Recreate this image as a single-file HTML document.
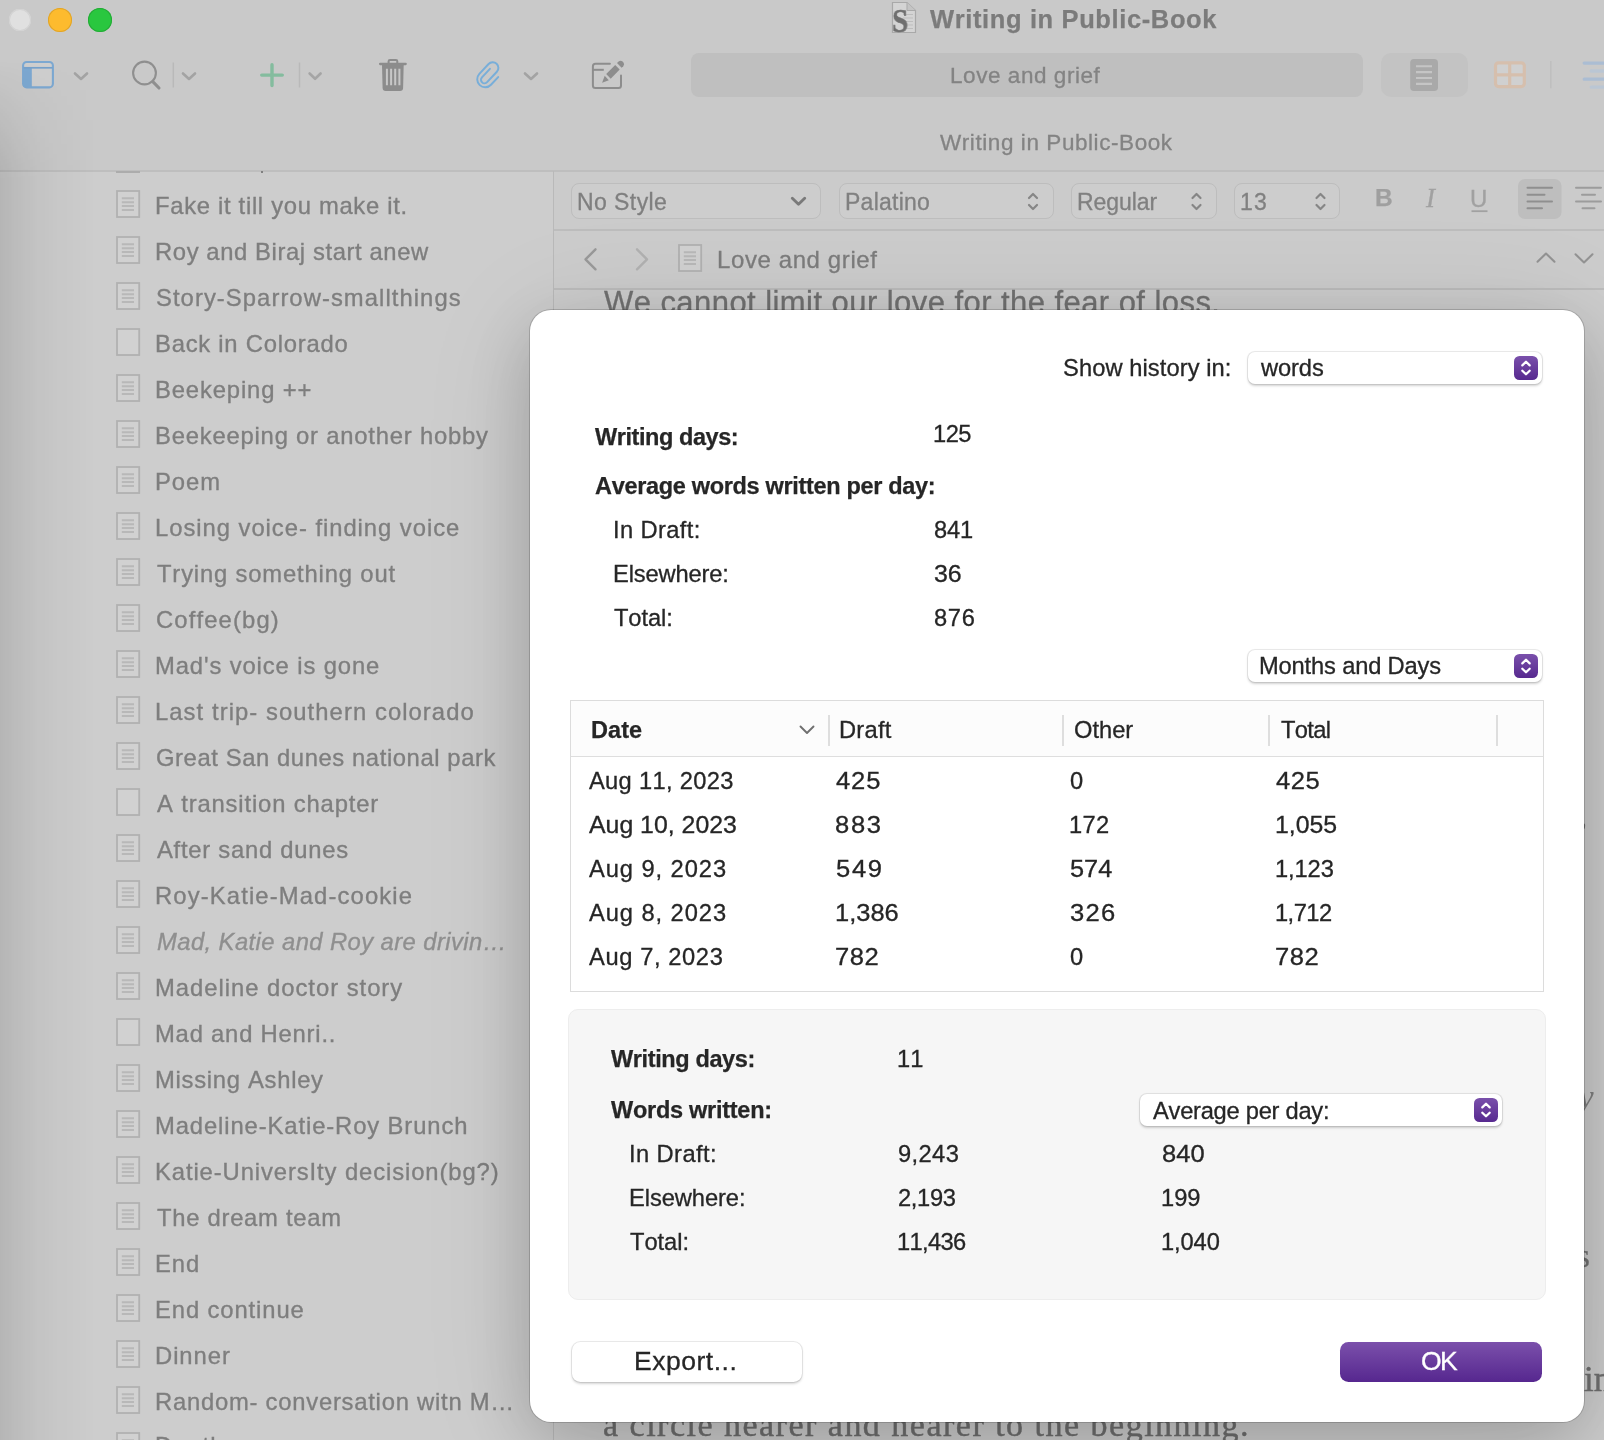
<!DOCTYPE html>
<html><head><meta charset="utf-8"><title>Writing in Public-Book</title>
<style>
html,body{margin:0;padding:0}
body{width:1604px;height:1440px;overflow:hidden;position:relative;background:#c9c9c9;font-family:"Liberation Sans",sans-serif;font-kerning:none}
.t{position:absolute;white-space:nowrap;line-height:1;font-kerning:none;will-change:transform}
.hl{position:absolute;height:1.5px}
.vl{position:absolute;width:1.5px}
.di{position:absolute}
#tb{position:absolute;left:0;top:0;width:1604px;height:170px;background:#c9c9c9}
#sb{position:absolute;left:0;top:171px;width:553px;height:1269px;background:#cdcdcd}
#fmt{position:absolute;left:554px;top:171px;width:1050px;height:58px;background:#cbcbcb}
#hdr{position:absolute;left:554px;top:230px;width:1050px;height:58px;background:#cccccc}
#ed{position:absolute;left:554px;top:289px;width:1050px;height:1151px;background:#cdcdcd}
.fb{position:absolute;box-sizing:border-box;border:1.5px solid #bdbdbd;border-radius:8px;background:#cdcdcd}
#vig{position:absolute;left:0;top:60px;width:96px;height:1380px;background:linear-gradient(90deg,rgba(0,0,0,.115),rgba(0,0,0,.078) 18%,rgba(0,0,0,.045) 40%,rgba(0,0,0,.018) 66%,rgba(0,0,0,0));-webkit-mask-image:linear-gradient(180deg,transparent,#000 120px);mask-image:linear-gradient(180deg,transparent,#000 120px)}
#dlg{position:absolute;left:530px;top:309.5px;width:1054px;height:1112.5px;border-radius:21px;background:#fff;box-shadow:0 0 0 1px rgba(0,0,0,.17),0 22px 70px rgba(0,0,0,.19),0 10px 120px rgba(0,0,0,.09)}
.sel{position:absolute;box-sizing:border-box;background:#fff;border-radius:7px;box-shadow:0 0 0 1px rgba(0,0,0,.075),0 1.5px 2.5px rgba(0,0,0,.18)}
.stp{position:absolute;width:24px;height:24px;border-radius:5.5px;background:linear-gradient(180deg,#7a50ab,#57298f)}
.stp svg{display:block}
#tbl{position:absolute;box-sizing:border-box;left:570px;top:700px;width:974px;height:291.5px;border:1.5px solid #dcdcdc;background:#fff}
#th{height:54.5px;background:#fcfcfc;border-bottom:1.5px solid #dedede}
#box{position:absolute;box-sizing:border-box;left:568px;top:1008.5px;width:978px;height:291.5px;border-radius:10px;background:#f6f6f6;border:1.5px solid #ededed}
#exp{position:absolute;box-sizing:border-box;left:571.5px;top:1341.5px;width:230.5px;height:40.5px;border-radius:8.5px;background:#fff;box-shadow:0 0 0 1px rgba(0,0,0,.075),0 1.5px 2.5px rgba(0,0,0,.17)}
#ok{position:absolute;left:1340px;top:1342px;width:202px;height:40px;border-radius:8.5px;background:linear-gradient(180deg,#7b50ab,#56278f)}
</style></head>
<body>
<div id="tb"></div>
<div id="sb"></div>
<div id="fmt"></div>
<div id="hdr"></div>
<div id="ed"></div>
<div class="hl" style="left:0;top:170px;width:1604px;background:#bebebe"></div>
<div class="hl" style="left:554px;top:229px;width:1050px;background:#bdbdbd"></div>
<div class="hl" style="left:554px;top:288px;width:1050px;background:#bcbcbc"></div>
<div class="vl" style="left:552.5px;top:171px;height:1269px;background:#b9b9b9"></div>
<div style="position:absolute;left:8.7px;top:8.8px;width:22.4px;height:22.4px;border-radius:50%;background:#e0e0e0;box-shadow:inset 0 0 0 1px #d2d2d2"></div>
<div style="position:absolute;left:48px;top:8px;width:24px;height:24px;border-radius:50%;background:#fdbb2e;box-shadow:inset 0 0 0 1px #dfa42a"></div>
<div style="position:absolute;left:87.9px;top:7.9px;width:24.2px;height:24.2px;border-radius:50%;background:#29c73f;box-shadow:inset 0 0 0 1px #24aa36"></div>
<div style="position:absolute;left:690.5px;top:53px;width:672px;height:44px;border-radius:8px;background:#bfbfbf"></div>
<div style="position:absolute;left:1381px;top:53px;width:86.5px;height:43.5px;border-radius:10px;background:#c3c3c3"></div>
<svg id="tbi" width="1604" height="170" viewBox="0 0 1604 170" style="position:absolute;left:0;top:0" fill="none"><rect x="23.1" y="62" width="29.8" height="25.4" rx="3.6" stroke="#7ca8d1" stroke-width="2.1" fill="rgba(255,255,255,.10)"/><path d="M23.1 68 H31.8 V87.4 H26 Q23.1 87.4 23.1 84.5 Z" fill="#7ca8d1"/><path d="M23.5 67.8 H52.5" stroke="#76a1cb" stroke-width="1.7"/><path d="M75 73.5 L81 79 L87 73.5" stroke="#a3a3a3" stroke-width="2.6" stroke-linecap="round" stroke-linejoin="round"/><circle cx="144.5" cy="73" r="11.4" stroke="#8f8f8f" stroke-width="2.1"/><path d="M152.8 81.6 L159 88" stroke="#8f8f8f" stroke-width="3.1" stroke-linecap="round"/><path d="M173.3 62.5 V87.5" stroke="#b9b9b9" stroke-width="1.5"/><path d="M183 73.5 L189 79 L195 73.5" stroke="#a3a3a3" stroke-width="2.6" stroke-linecap="round" stroke-linejoin="round"/><path d="M272 64.8 V85.5 M261.7 75.1 H282.3" stroke="#84bc9e" stroke-width="3.4" stroke-linecap="round"/><path d="M299.5 62.5 V87.5" stroke="#b9b9b9" stroke-width="1.5"/><path d="M309.6 73.5 L315.1 78.8 L320.6 73.5" stroke="#a5a5a5" stroke-width="2.6" stroke-linecap="round" stroke-linejoin="round"/><g fill="#8c8c8c"><rect x="379" y="62.7" width="27.8" height="2.5" rx="1.1"/><path d="M388.6 63 V61.3 Q388.6 60 390 60 H395.9 Q397.3 60 397.3 61.3 V63" stroke="#8c8c8c" stroke-width="2" fill="none"/><path d="M382 64.5 H403.7 L403.1 88 Q403 91 400 91 H385.7 Q382.7 91 382.6 88 Z"/></g><path d="M386.9 68.7 V85.3 M391.1 68.7 V85.3 M395.2 68.7 V85.3 M399.4 68.7 V85.3" stroke="#c7c7c7" stroke-width="2"/><g transform="translate(489,75.2) rotate(43) scale(1.04)"><path d="M7.65 -4.7 V5.4 A7.65 7.65 0 0 1 -7.65 5.4 V-7.6 A5.45 5.45 0 0 1 3.25 -7.6 V6.15 A3.4 3.4 0 0 1 -3.55 6.15 V-5.1" stroke="#78aed9" stroke-width="1.9" stroke-linecap="round" stroke-linejoin="round"/></g><path d="M525 73.5 L531 79 L537 73.5" stroke="#a3a3a3" stroke-width="2.6" stroke-linecap="round" stroke-linejoin="round"/><path d="M609.9 63.8 H595.4 Q592.9 63.8 592.9 66.3 V85.5 Q592.9 88 595.4 88 H618.5 Q621 88 621 85.5 V75.4" stroke="#8d8d8d" stroke-width="2" stroke-linecap="round"/><path d="M592.9 69.8 H603.8" stroke="#8d8d8d" stroke-width="2"/><g fill="#8d8d8d"><path d="M602.1 82.7 L604.7 75.8 L608.8 80.3 Z"/><path d="M606.2 73.9 L615.2 65 L619.7 69.5 L610.7 78.8 Z"/><path d="M617 63.1 L618.6 61.5 Q620.6 59.8 622.6 61.6 L623.3 62.3 Q625 64.3 623.3 66.2 L621.6 67.8 Z"/></g><rect x="1410.2" y="58.9" width="27.8" height="32.1" rx="3.8" fill="#a9a9a9"/><path d="M1416 66.3 H1432 M1416 72.1 H1432 M1416 78 H1432 M1416 83.9 H1432" stroke="#c5c5c5" stroke-width="2.1"/><rect x="1495.5" y="62.8" width="28.8" height="23.8" rx="3" stroke="#d6bfad" stroke-width="3.2" fill="rgba(255,255,255,.13)"/><path d="M1509.7 63 V86.5 M1495.5 74.8 H1524.3" stroke="#d6bfad" stroke-width="3.2"/><path d="M1550.8 61 V88.2" stroke="#bebebe" stroke-width="1.4"/><path d="M1584.2 63.1 H1606 M1584.2 79.2 H1606" stroke="#abbdd3" stroke-width="3.3" stroke-linecap="round"/><path d="M1591.2 71 H1606 M1591.2 87.1 H1606" stroke="#bac6d4" stroke-width="3.3" stroke-linecap="round"/></svg>
<svg width="30" height="36" viewBox="0 0 30 36" style="position:absolute;left:889px;top:0px"><path d="M3.5 2.5 H18 L26.5 10.5 V32.5 H3.5 Z" fill="#d4d4d4" stroke="#a9a9a9" stroke-width="1.2"/><path d="M18 2.5 V10.5 H26.5" fill="#c4c4c4" stroke="#a9a9a9" stroke-width="1"/><path d="M14 14.5 H24 M14 18 H24 M14 21.5 H24 M14 25 H24 M14 28.5 H24" stroke="#bdbdbd" stroke-width="1"/></svg>
<div class="t" style="left:891.5px;top:3.5px;font-size:34px;font-weight:bold;font-family:'Liberation Serif',serif;color:#6f6f6f;transform:scaleX(.86);transform-origin:0 0;-webkit-text-stroke:.5px">S</div>
<div class="t" style="left:929.5px;top:7.3px;font-size:25.5px;letter-spacing:0.624px;color:#7b7b7b;font-weight:bold;-webkit-text-stroke:0.25px;">Writing in Public-Book</div>
<div class="t" style="left:950.2px;top:65.4px;font-size:22.5px;letter-spacing:0.555px;color:#838383;-webkit-text-stroke:0.3px;">Love and grief</div>
<div class="t" style="left:939.9px;top:132.4px;font-size:22.5px;letter-spacing:0.571px;color:#838383;-webkit-text-stroke:0.3px;">Writing in Public-Book</div>
<svg class="di" style="left:115px;top:189px" width="26" height="30" viewBox="0 0 26 30" fill="none"><rect x="2" y="2" width="22.2" height="26" stroke="#b1b1b1" stroke-width="1.8" fill="#d1d1d1"/><path d="M6.8 9.3 H19 M6.8 13.2 H19 M6.8 17 H19 M6.8 21 H19" stroke="#b8b8b8" stroke-width="1.9"/></svg>
<div class="t" style="left:155.2px;top:194.1px;font-size:23.8px;letter-spacing:0.696px;color:#7e7e7e;-webkit-text-stroke:0.35px;">Fake it till you make it.</div>
<svg class="di" style="left:115px;top:235px" width="26" height="30" viewBox="0 0 26 30" fill="none"><rect x="2" y="2" width="22.2" height="26" stroke="#b1b1b1" stroke-width="1.8" fill="#d1d1d1"/><path d="M6.8 9.3 H19 M6.8 13.2 H19 M6.8 17 H19 M6.8 21 H19" stroke="#b8b8b8" stroke-width="1.9"/></svg>
<div class="t" style="left:155.2px;top:240.1px;font-size:23.8px;letter-spacing:0.605px;color:#7e7e7e;-webkit-text-stroke:0.35px;">Roy and Biraj start anew</div>
<svg class="di" style="left:115px;top:281px" width="26" height="30" viewBox="0 0 26 30" fill="none"><rect x="2" y="2" width="22.2" height="26" stroke="#b1b1b1" stroke-width="1.8" fill="#d1d1d1"/><path d="M6.8 9.3 H19 M6.8 13.2 H19 M6.8 17 H19 M6.8 21 H19" stroke="#b8b8b8" stroke-width="1.9"/></svg>
<div class="t" style="left:156.1px;top:286.1px;font-size:23.8px;letter-spacing:1.065px;color:#7e7e7e;-webkit-text-stroke:0.35px;">Story-Sparrow-smallthings</div>
<svg class="di" style="left:115px;top:327px" width="26" height="30" viewBox="0 0 26 30" fill="none"><rect x="2" y="2" width="22.2" height="26" stroke="#b1b1b1" stroke-width="1.8" fill="#d1d1d1"/></svg>
<div class="t" style="left:155.2px;top:332.1px;font-size:23.8px;letter-spacing:0.761px;color:#7e7e7e;-webkit-text-stroke:0.35px;">Back in Colorado</div>
<svg class="di" style="left:115px;top:373px" width="26" height="30" viewBox="0 0 26 30" fill="none"><rect x="2" y="2" width="22.2" height="26" stroke="#b1b1b1" stroke-width="1.8" fill="#d1d1d1"/><path d="M6.8 9.3 H19 M6.8 13.2 H19 M6.8 17 H19 M6.8 21 H19" stroke="#b8b8b8" stroke-width="1.9"/></svg>
<div class="t" style="left:155.2px;top:378.1px;font-size:23.8px;letter-spacing:0.867px;color:#7e7e7e;-webkit-text-stroke:0.35px;">Beekeping ++</div>
<svg class="di" style="left:115px;top:419px" width="26" height="30" viewBox="0 0 26 30" fill="none"><rect x="2" y="2" width="22.2" height="26" stroke="#b1b1b1" stroke-width="1.8" fill="#d1d1d1"/><path d="M6.8 9.3 H19 M6.8 13.2 H19 M6.8 17 H19 M6.8 21 H19" stroke="#b8b8b8" stroke-width="1.9"/></svg>
<div class="t" style="left:155.2px;top:424.1px;font-size:23.8px;letter-spacing:0.797px;color:#7e7e7e;-webkit-text-stroke:0.35px;">Beekeeping or another hobby</div>
<svg class="di" style="left:115px;top:465px" width="26" height="30" viewBox="0 0 26 30" fill="none"><rect x="2" y="2" width="22.2" height="26" stroke="#b1b1b1" stroke-width="1.8" fill="#d1d1d1"/><path d="M6.8 9.3 H19 M6.8 13.2 H19 M6.8 17 H19 M6.8 21 H19" stroke="#b8b8b8" stroke-width="1.9"/></svg>
<div class="t" style="left:155.2px;top:470.1px;font-size:23.8px;letter-spacing:0.983px;color:#7e7e7e;-webkit-text-stroke:0.35px;">Poem</div>
<svg class="di" style="left:115px;top:511px" width="26" height="30" viewBox="0 0 26 30" fill="none"><rect x="2" y="2" width="22.2" height="26" stroke="#b1b1b1" stroke-width="1.8" fill="#d1d1d1"/><path d="M6.8 9.3 H19 M6.8 13.2 H19 M6.8 17 H19 M6.8 21 H19" stroke="#b8b8b8" stroke-width="1.9"/></svg>
<div class="t" style="left:155.2px;top:516.1px;font-size:23.8px;letter-spacing:0.968px;color:#7e7e7e;-webkit-text-stroke:0.35px;">Losing voice- finding voice</div>
<svg class="di" style="left:115px;top:557px" width="26" height="30" viewBox="0 0 26 30" fill="none"><rect x="2" y="2" width="22.2" height="26" stroke="#b1b1b1" stroke-width="1.8" fill="#d1d1d1"/><path d="M6.8 9.3 H19 M6.8 13.2 H19 M6.8 17 H19 M6.8 21 H19" stroke="#b8b8b8" stroke-width="1.9"/></svg>
<div class="t" style="left:156.7px;top:562.1px;font-size:23.8px;letter-spacing:0.835px;color:#7e7e7e;-webkit-text-stroke:0.35px;">Trying something out</div>
<svg class="di" style="left:115px;top:603px" width="26" height="30" viewBox="0 0 26 30" fill="none"><rect x="2" y="2" width="22.2" height="26" stroke="#b1b1b1" stroke-width="1.8" fill="#d1d1d1"/><path d="M6.8 9.3 H19 M6.8 13.2 H19 M6.8 17 H19 M6.8 21 H19" stroke="#b8b8b8" stroke-width="1.9"/></svg>
<div class="t" style="left:156px;top:608.1px;font-size:23.8px;letter-spacing:1.138px;color:#7e7e7e;-webkit-text-stroke:0.35px;">Coffee(bg)</div>
<svg class="di" style="left:115px;top:649px" width="26" height="30" viewBox="0 0 26 30" fill="none"><rect x="2" y="2" width="22.2" height="26" stroke="#b1b1b1" stroke-width="1.8" fill="#d1d1d1"/><path d="M6.8 9.3 H19 M6.8 13.2 H19 M6.8 17 H19 M6.8 21 H19" stroke="#b8b8b8" stroke-width="1.9"/></svg>
<div class="t" style="left:155.2px;top:654.1px;font-size:23.8px;letter-spacing:0.891px;color:#7e7e7e;-webkit-text-stroke:0.35px;">Mad's voice is gone</div>
<svg class="di" style="left:115px;top:695px" width="26" height="30" viewBox="0 0 26 30" fill="none"><rect x="2" y="2" width="22.2" height="26" stroke="#b1b1b1" stroke-width="1.8" fill="#d1d1d1"/><path d="M6.8 9.3 H19 M6.8 13.2 H19 M6.8 17 H19 M6.8 21 H19" stroke="#b8b8b8" stroke-width="1.9"/></svg>
<div class="t" style="left:155.2px;top:700.1px;font-size:23.8px;letter-spacing:1.075px;color:#7e7e7e;-webkit-text-stroke:0.35px;">Last trip- southern colorado</div>
<svg class="di" style="left:115px;top:741px" width="26" height="30" viewBox="0 0 26 30" fill="none"><rect x="2" y="2" width="22.2" height="26" stroke="#b1b1b1" stroke-width="1.8" fill="#d1d1d1"/><path d="M6.8 9.3 H19 M6.8 13.2 H19 M6.8 17 H19 M6.8 21 H19" stroke="#b8b8b8" stroke-width="1.9"/></svg>
<div class="t" style="left:156px;top:746.1px;font-size:23.8px;letter-spacing:0.594px;color:#7e7e7e;-webkit-text-stroke:0.35px;">Great San dunes national park</div>
<svg class="di" style="left:115px;top:787px" width="26" height="30" viewBox="0 0 26 30" fill="none"><rect x="2" y="2" width="22.2" height="26" stroke="#b1b1b1" stroke-width="1.8" fill="#d1d1d1"/></svg>
<div class="t" style="left:157.2px;top:792.1px;font-size:23.8px;letter-spacing:0.852px;color:#7e7e7e;-webkit-text-stroke:0.35px;">A transition chapter</div>
<svg class="di" style="left:115px;top:833px" width="26" height="30" viewBox="0 0 26 30" fill="none"><rect x="2" y="2" width="22.2" height="26" stroke="#b1b1b1" stroke-width="1.8" fill="#d1d1d1"/><path d="M6.8 9.3 H19 M6.8 13.2 H19 M6.8 17 H19 M6.8 21 H19" stroke="#b8b8b8" stroke-width="1.9"/></svg>
<div class="t" style="left:157.2px;top:838.1px;font-size:23.8px;letter-spacing:0.744px;color:#7e7e7e;-webkit-text-stroke:0.35px;">After sand dunes</div>
<svg class="di" style="left:115px;top:879px" width="26" height="30" viewBox="0 0 26 30" fill="none"><rect x="2" y="2" width="22.2" height="26" stroke="#b1b1b1" stroke-width="1.8" fill="#d1d1d1"/><path d="M6.8 9.3 H19 M6.8 13.2 H19 M6.8 17 H19 M6.8 21 H19" stroke="#b8b8b8" stroke-width="1.9"/></svg>
<div class="t" style="left:155.2px;top:884.1px;font-size:23.8px;letter-spacing:1.135px;color:#7e7e7e;-webkit-text-stroke:0.35px;">Roy-Katie-Mad-cookie</div>
<svg class="di" style="left:115px;top:925px" width="26" height="30" viewBox="0 0 26 30" fill="none"><rect x="2" y="2" width="22.2" height="26" stroke="#b1b1b1" stroke-width="1.8" fill="#d1d1d1"/><path d="M6.8 9.3 H19 M6.8 13.2 H19 M6.8 17 H19 M6.8 21 H19" stroke="#b8b8b8" stroke-width="1.9"/></svg>
<div class="t" style="left:156.5px;top:930.1px;font-size:23.8px;letter-spacing:0.421px;color:#8f8f8f;font-style:italic;-webkit-text-stroke:0.35px;">Mad, Katie and Roy are drivin…</div>
<svg class="di" style="left:115px;top:971px" width="26" height="30" viewBox="0 0 26 30" fill="none"><rect x="2" y="2" width="22.2" height="26" stroke="#b1b1b1" stroke-width="1.8" fill="#d1d1d1"/><path d="M6.8 9.3 H19 M6.8 13.2 H19 M6.8 17 H19 M6.8 21 H19" stroke="#b8b8b8" stroke-width="1.9"/></svg>
<div class="t" style="left:155.2px;top:976.1px;font-size:23.8px;letter-spacing:0.983px;color:#7e7e7e;-webkit-text-stroke:0.35px;">Madeline doctor story</div>
<svg class="di" style="left:115px;top:1017px" width="26" height="30" viewBox="0 0 26 30" fill="none"><rect x="2" y="2" width="22.2" height="26" stroke="#b1b1b1" stroke-width="1.8" fill="#d1d1d1"/></svg>
<div class="t" style="left:155.2px;top:1022.1px;font-size:23.8px;letter-spacing:0.792px;color:#7e7e7e;-webkit-text-stroke:0.35px;">Mad and Henri..</div>
<svg class="di" style="left:115px;top:1063px" width="26" height="30" viewBox="0 0 26 30" fill="none"><rect x="2" y="2" width="22.2" height="26" stroke="#b1b1b1" stroke-width="1.8" fill="#d1d1d1"/><path d="M6.8 9.3 H19 M6.8 13.2 H19 M6.8 17 H19 M6.8 21 H19" stroke="#b8b8b8" stroke-width="1.9"/></svg>
<div class="t" style="left:155.2px;top:1068.1px;font-size:23.8px;letter-spacing:0.714px;color:#7e7e7e;-webkit-text-stroke:0.35px;">Missing Ashley</div>
<svg class="di" style="left:115px;top:1109px" width="26" height="30" viewBox="0 0 26 30" fill="none"><rect x="2" y="2" width="22.2" height="26" stroke="#b1b1b1" stroke-width="1.8" fill="#d1d1d1"/><path d="M6.8 9.3 H19 M6.8 13.2 H19 M6.8 17 H19 M6.8 21 H19" stroke="#b8b8b8" stroke-width="1.9"/></svg>
<div class="t" style="left:155.2px;top:1114.1px;font-size:23.8px;letter-spacing:0.895px;color:#7e7e7e;-webkit-text-stroke:0.35px;">Madeline-Katie-Roy Brunch</div>
<svg class="di" style="left:115px;top:1155px" width="26" height="30" viewBox="0 0 26 30" fill="none"><rect x="2" y="2" width="22.2" height="26" stroke="#b1b1b1" stroke-width="1.8" fill="#d1d1d1"/><path d="M6.8 9.3 H19 M6.8 13.2 H19 M6.8 17 H19 M6.8 21 H19" stroke="#b8b8b8" stroke-width="1.9"/></svg>
<div class="t" style="left:155.2px;top:1160.1px;font-size:23.8px;letter-spacing:0.902px;color:#7e7e7e;-webkit-text-stroke:0.35px;">Katie-UniversIty decision(bg?)</div>
<svg class="di" style="left:115px;top:1201px" width="26" height="30" viewBox="0 0 26 30" fill="none"><rect x="2" y="2" width="22.2" height="26" stroke="#b1b1b1" stroke-width="1.8" fill="#d1d1d1"/><path d="M6.8 9.3 H19 M6.8 13.2 H19 M6.8 17 H19 M6.8 21 H19" stroke="#b8b8b8" stroke-width="1.9"/></svg>
<div class="t" style="left:156.7px;top:1206.1px;font-size:23.8px;letter-spacing:0.73px;color:#7e7e7e;-webkit-text-stroke:0.35px;">The dream team</div>
<svg class="di" style="left:115px;top:1247px" width="26" height="30" viewBox="0 0 26 30" fill="none"><rect x="2" y="2" width="22.2" height="26" stroke="#b1b1b1" stroke-width="1.8" fill="#d1d1d1"/><path d="M6.8 9.3 H19 M6.8 13.2 H19 M6.8 17 H19 M6.8 21 H19" stroke="#b8b8b8" stroke-width="1.9"/></svg>
<div class="t" style="left:155.2px;top:1252.1px;font-size:23.8px;letter-spacing:0.97px;color:#7e7e7e;-webkit-text-stroke:0.35px;">End</div>
<svg class="di" style="left:115px;top:1293px" width="26" height="30" viewBox="0 0 26 30" fill="none"><rect x="2" y="2" width="22.2" height="26" stroke="#b1b1b1" stroke-width="1.8" fill="#d1d1d1"/><path d="M6.8 9.3 H19 M6.8 13.2 H19 M6.8 17 H19 M6.8 21 H19" stroke="#b8b8b8" stroke-width="1.9"/></svg>
<div class="t" style="left:155.2px;top:1298.1px;font-size:23.8px;letter-spacing:0.897px;color:#7e7e7e;-webkit-text-stroke:0.35px;">End continue</div>
<svg class="di" style="left:115px;top:1339px" width="26" height="30" viewBox="0 0 26 30" fill="none"><rect x="2" y="2" width="22.2" height="26" stroke="#b1b1b1" stroke-width="1.8" fill="#d1d1d1"/><path d="M6.8 9.3 H19 M6.8 13.2 H19 M6.8 17 H19 M6.8 21 H19" stroke="#b8b8b8" stroke-width="1.9"/></svg>
<div class="t" style="left:155.2px;top:1344.1px;font-size:23.8px;letter-spacing:0.947px;color:#7e7e7e;-webkit-text-stroke:0.35px;">Dinner</div>
<svg class="di" style="left:115px;top:1385px" width="26" height="30" viewBox="0 0 26 30" fill="none"><rect x="2" y="2" width="22.2" height="26" stroke="#b1b1b1" stroke-width="1.8" fill="#d1d1d1"/><path d="M6.8 9.3 H19 M6.8 13.2 H19 M6.8 17 H19 M6.8 21 H19" stroke="#b8b8b8" stroke-width="1.9"/></svg>
<div class="t" style="left:155.2px;top:1390.1px;font-size:23.8px;letter-spacing:0.762px;color:#7e7e7e;-webkit-text-stroke:0.35px;">Random- conversation witn M…</div>
<svg class="di" style="left:115px;top:1431px" width="26" height="30" viewBox="0 0 26 30" fill="none"><rect x="2" y="2" width="22.2" height="26" stroke="#b1b1b1" stroke-width="1.8" fill="#d1d1d1"/><path d="M6.8 9.3 H19 M6.8 13.2 H19 M6.8 17 H19 M6.8 21 H19" stroke="#b8b8b8" stroke-width="1.9"/></svg>
<div class="t" style="left:155.2px;top:1434.3px;font-size:23.8px;letter-spacing:1.247px;color:#7e7e7e;-webkit-text-stroke:0.35px;">Death</div>
<div style="position:absolute;left:116px;top:170.5px;width:24px;height:2px;background:#acacac"></div>
<div style="position:absolute;left:260.5px;top:170.5px;width:2.5px;height:2.5px;background:#808080"></div>
<div class="fb" style="left:571px;top:183px;width:250px;height:36px"></div>
<div class="fb" style="left:839px;top:183px;width:214.5px;height:36px"></div>
<div class="fb" style="left:1071px;top:183px;width:146px;height:36px"></div>
<div class="fb" style="left:1234px;top:183px;width:106px;height:36px"></div>
<div class="t" style="left:577.1px;top:190.7px;font-size:23px;letter-spacing:0.426px;color:#7f7f7f;-webkit-text-stroke:0.3px;">No Style</div>
<div class="t" style="left:845.1px;top:190.7px;font-size:23px;letter-spacing:0.248px;color:#808080;-webkit-text-stroke:0.3px;">Palatino</div>
<div class="t" style="left:1077.1px;top:190.7px;font-size:23px;letter-spacing:-0.046px;color:#808080;-webkit-text-stroke:0.3px;">Regular</div>
<div class="t" style="left:1240.2px;top:190.7px;font-size:23px;letter-spacing:1.18px;color:#808080;-webkit-text-stroke:0.3px;">13</div>
<svg width="1604" height="130" viewBox="0 170 1604 130" style="position:absolute;left:0;top:170px" fill="none"><path d="M792.3 198.3 L798.5 204.3 L804.7 198.3" stroke="#7a7a7a" stroke-width="2.9" stroke-linecap="round" stroke-linejoin="round"/><g stroke="#868686" stroke-width="2.2" stroke-linecap="round" stroke-linejoin="round"><path d="M1029 198 L1033 194 L1037 198 M1029 205 L1033 209 L1037 205"/><path d="M1192.5 198 L1196.5 194 L1200.5 198 M1192.5 205 L1196.5 209 L1200.5 205"/><path d="M1316.5 198 L1320.5 194 L1324.5 198 M1316.5 205 L1320.5 209 L1324.5 205"/></g><path d="M1471.5 211.2 H1487.5" stroke="#a1a1a1" stroke-width="1.8"/><rect x="1518" y="179" width="43.5" height="40" rx="7" fill="#bebebe"/><path d="M1527.5 187.8 H1552 M1527.5 194.7 H1544.5 M1527.5 201.6 H1552 M1527.5 208.3 H1542" stroke="#8f8f8f" stroke-width="2" stroke-linecap="round"/><path d="M1576 187.8 H1601 M1582 194.7 H1595 M1576 201.6 H1601 M1582.5 208.3 H1594.5" stroke="#9c9c9c" stroke-width="2" stroke-linecap="round"/><path d="M595.5 249.3 L585.5 259.3 L595.5 269.3" stroke="#999" stroke-width="2.4" stroke-linecap="round" stroke-linejoin="round"/><path d="M637 249.3 L647 259.3 L637 269.3" stroke="#b1b1b1" stroke-width="2.4" stroke-linecap="round" stroke-linejoin="round"/><path d="M1537.5 261.7 L1546 253.5 L1554.5 261.7" stroke="#939393" stroke-width="2.1" stroke-linecap="round" stroke-linejoin="round"/><path d="M1575.5 254.3 L1584 262.5 L1592.5 254.3" stroke="#939393" stroke-width="2.1" stroke-linecap="round" stroke-linejoin="round"/></svg>
<div class="t" style="left:1374.9px;top:186.3px;font-size:24.5px;color:#9f9f9f;font-weight:bold;-webkit-text-stroke:0.25px;">B</div>
<div class="t" style="left:1425.6px;top:184.7px;font-size:27px;color:#a1a1a1;font-style:italic;font-family:'Liberation Serif',serif;-webkit-text-stroke:0.3px;">I</div>
<div class="t" style="left:1470.1px;top:186.7px;font-size:24px;color:#a1a1a1;-webkit-text-stroke:0.3px;">U</div>
<svg class="di" style="left:677px;top:242.8px" width="26" height="30" viewBox="0 0 26 30" fill="none"><rect x="2" y="2" width="22.2" height="26" stroke="#b1b1b1" stroke-width="1.8" fill="#d1d1d1"/><path d="M6.8 9.3 H19 M6.8 13.2 H19 M6.8 17 H19 M6.8 21 H19" stroke="#b8b8b8" stroke-width="1.9"/></svg>
<div class="t" style="left:717px;top:247.7px;font-size:24px;letter-spacing:0.602px;color:#7c7c7c;-webkit-text-stroke:0.3px;">Love and grief</div>
<div class="t" style="left:604.4px;top:286.7px;font-size:31px;letter-spacing:0.44px;color:#717171;-webkit-text-stroke:0.3px;">We cannot limit our love for the fear of loss.</div>
<div class="t" style="left:603.3px;top:1407.9px;font-size:34px;letter-spacing:1.488px;color:#6e6e6e;font-family:'Liberation Serif',serif;-webkit-text-stroke:0.45px;">a circle nearer and nearer to the beginning.</div>
<div class="t" style="left:1583.8px;top:1362.1px;font-size:35px;color:#707070;font-family:'Liberation Serif',serif;-webkit-text-stroke:0.4px;">in</div>
<div class="t" style="left:1576.6px;top:1239.8px;font-size:33px;color:#717171;font-family:'Liberation Serif',serif;-webkit-text-stroke:0.3px;">s</div>
<div class="t" style="left:1578.8px;top:1080.8px;font-size:33px;color:#808080;font-style:italic;font-family:'Liberation Serif',serif;">y</div>
<div class="t" style="left:1579.2px;top:799.8px;font-size:33px;color:#757575;font-family:'Liberation Serif',serif;">,</div>
<div id="vig"></div>
<div id="dlg"></div>
<div class="t" style="left:1062.6px;top:357.3px;font-size:23.7px;letter-spacing:0.083px;color:#262626;-webkit-text-stroke:0.3px;">Show history in:</div>
<div class="sel" style="left:1247.5px;top:351.5px;width:294.5px;height:32.5px"></div>
<div class="sel" style="left:1247.5px;top:649.5px;width:294.5px;height:32.5px"></div>
<div class="t" style="left:1261px;top:357.3px;font-size:23.7px;letter-spacing:-0.099px;color:#262626;-webkit-text-stroke:0.3px;">words</div>
<div class="t" style="left:1259.1px;top:654.7px;font-size:23.7px;letter-spacing:-0.159px;color:#262626;-webkit-text-stroke:0.3px;">Months and Days</div>
<div class="stp" style="left:1514px;top:356px"><svg width="24" height="24" viewBox="0 0 24 24" fill="none"><path d="M8.3 9.4 L12 5.8 L15.7 9.4 M8.3 14.7 L12 18.3 L15.7 14.7" stroke="#fff" stroke-width="2.3" stroke-linecap="round" stroke-linejoin="round"/></svg></div>
<div class="stp" style="left:1514px;top:654px"><svg width="24" height="24" viewBox="0 0 24 24" fill="none"><path d="M8.3 9.4 L12 5.8 L15.7 9.4 M8.3 14.7 L12 18.3 L15.7 14.7" stroke="#fff" stroke-width="2.3" stroke-linecap="round" stroke-linejoin="round"/></svg></div>
<div class="t" style="left:595.2px;top:425.5px;font-size:23.5px;letter-spacing:-0.429px;color:#262626;font-weight:bold;-webkit-text-stroke:0.25px;">Writing days:</div>
<div class="t" style="left:932.7px;top:422.8px;font-size:23.7px;letter-spacing:-0.521px;color:#262626;-webkit-text-stroke:0.3px;">125</div>
<div class="t" style="left:594.6px;top:475.3px;font-size:23.5px;letter-spacing:-0.322px;color:#262626;font-weight:bold;-webkit-text-stroke:0.25px;">Average words written per day:</div>
<div class="t" style="left:612.6px;top:518.8px;font-size:23.7px;letter-spacing:0.382px;color:#262626;-webkit-text-stroke:0.3px;">In Draft:</div>
<div class="t" style="left:933.5px;top:518.8px;font-size:23.7px;letter-spacing:-0.178px;color:#262626;-webkit-text-stroke:0.3px;">841</div>
<div class="t" style="left:612.9px;top:562.8px;font-size:23.7px;letter-spacing:-0.148px;color:#262626;-webkit-text-stroke:0.3px;">Elsewhere:</div>
<div class="t" style="left:933.5px;top:562.8px;font-size:23.7px;color:#262626;-webkit-text-stroke:0.3px;transform:scaleX(1.053);transform-origin:0 0;">36</div>
<div class="t" style="left:614.3px;top:606.8px;font-size:23.7px;letter-spacing:-0.095px;color:#262626;-webkit-text-stroke:0.3px;">Total:</div>
<div class="t" style="left:933.5px;top:606.8px;font-size:23.7px;letter-spacing:0.665px;color:#262626;-webkit-text-stroke:0.3px;">876</div>
<div id="tbl"><div id="th"></div></div>
<div class="vl" style="left:828.05px;top:714.5px;height:31px;background:#dedede"></div>
<div class="vl" style="left:1062.25px;top:714.5px;height:31px;background:#dedede"></div>
<div class="vl" style="left:1268.45px;top:714.5px;height:31px;background:#dedede"></div>
<div class="vl" style="left:1496.25px;top:714.5px;height:31px;background:#dedede"></div>
<div class="t" style="left:591.4px;top:718.8px;font-size:23.5px;letter-spacing:0.046px;color:#262626;font-weight:bold;-webkit-text-stroke:0.25px;">Date</div>
<svg width="18" height="12" viewBox="0 0 18 12" style="position:absolute;left:798px;top:724px" fill="none"><path d="M2.5 2.5 L9 9 L15.5 2.5" stroke="#6f6f6f" stroke-width="1.9" stroke-linecap="round" stroke-linejoin="round"/></svg>
<div class="t" style="left:839.1px;top:718.6px;font-size:23.7px;letter-spacing:0.265px;color:#262626;-webkit-text-stroke:0.3px;">Draft</div>
<div class="t" style="left:1073.6px;top:718.6px;font-size:23.7px;letter-spacing:-0.014px;color:#262626;-webkit-text-stroke:0.3px;">Other</div>
<div class="t" style="left:1281px;top:718.6px;font-size:23.7px;letter-spacing:-0.643px;color:#262626;-webkit-text-stroke:0.3px;">Total</div>
<div class="t" style="left:589.2px;top:770.4px;font-size:23.7px;letter-spacing:0.307px;color:#262626;-webkit-text-stroke:0.3px;">Aug 11, 2023</div>
<div class="t" style="left:835.9px;top:770.4px;font-size:23.7px;letter-spacing:0.813px;color:#262626;-webkit-text-stroke:0.3px;transform:scaleX(1.08);transform-origin:0 0;">425</div>
<div class="t" style="left:1069.9px;top:770.4px;font-size:23.7px;letter-spacing:1.671px;color:#262626;-webkit-text-stroke:0.3px;">0</div>
<div class="t" style="left:1276.1px;top:770.4px;font-size:23.7px;letter-spacing:0.489px;color:#262626;-webkit-text-stroke:0.3px;transform:scaleX(1.08);transform-origin:0 0;">425</div>
<div class="t" style="left:589.2px;top:814.3px;font-size:23.7px;color:#262626;-webkit-text-stroke:0.3px;transform:scaleX(1.049);transform-origin:0 0;">Aug 10, 2023</div>
<div class="t" style="left:835.4px;top:814.3px;font-size:23.7px;letter-spacing:1.542px;color:#262626;-webkit-text-stroke:0.3px;transform:scaleX(1.08);transform-origin:0 0;">883</div>
<div class="t" style="left:1069px;top:814.3px;font-size:23.7px;letter-spacing:0.327px;color:#262626;-webkit-text-stroke:0.3px;">172</div>
<div class="t" style="left:1274.8px;top:814.3px;font-size:23.7px;color:#262626;-webkit-text-stroke:0.3px;transform:scaleX(1.049);transform-origin:0 0;">1,055</div>
<div class="t" style="left:589.2px;top:858.2px;font-size:23.7px;letter-spacing:0.936px;color:#262626;-webkit-text-stroke:0.3px;">Aug 9, 2023</div>
<div class="t" style="left:835.5px;top:858.2px;font-size:23.7px;letter-spacing:1.542px;color:#262626;-webkit-text-stroke:0.3px;transform:scaleX(1.08);transform-origin:0 0;">549</div>
<div class="t" style="left:1069.8px;top:858.2px;font-size:23.7px;color:#262626;-webkit-text-stroke:0.3px;transform:scaleX(1.069);transform-origin:0 0;">574</div>
<div class="t" style="left:1274.9px;top:858.2px;font-size:23.7px;letter-spacing:-0.115px;color:#262626;-webkit-text-stroke:0.3px;">1,123</div>
<div class="t" style="left:589.2px;top:902.1px;font-size:23.7px;letter-spacing:0.936px;color:#262626;-webkit-text-stroke:0.3px;">Aug 8, 2023</div>
<div class="t" style="left:834.6px;top:902.1px;font-size:23.7px;color:#262626;-webkit-text-stroke:0.3px;transform:scaleX(1.075);transform-origin:0 0;">1,386</div>
<div class="t" style="left:1069.8px;top:902.1px;font-size:23.7px;letter-spacing:1.201px;color:#262626;-webkit-text-stroke:0.3px;transform:scaleX(1.08);transform-origin:0 0;">326</div>
<div class="t" style="left:1274.9px;top:902.1px;font-size:23.7px;letter-spacing:-0.553px;color:#262626;-webkit-text-stroke:0.3px;">1,712</div>
<div class="t" style="left:589.2px;top:946px;font-size:23.7px;letter-spacing:0.606px;color:#262626;-webkit-text-stroke:0.3px;">Aug 7, 2023</div>
<div class="t" style="left:835.2px;top:946px;font-size:23.7px;letter-spacing:0.506px;color:#262626;-webkit-text-stroke:0.3px;transform:scaleX(1.08);transform-origin:0 0;">782</div>
<div class="t" style="left:1069.9px;top:946px;font-size:23.7px;letter-spacing:1.671px;color:#262626;-webkit-text-stroke:0.3px;">0</div>
<div class="t" style="left:1275.4px;top:946px;font-size:23.7px;letter-spacing:0.46px;color:#262626;-webkit-text-stroke:0.3px;transform:scaleX(1.08);transform-origin:0 0;">782</div>
<div id="box"></div>
<div class="t" style="left:611.2px;top:1048px;font-size:23.5px;letter-spacing:-0.379px;color:#262626;font-weight:bold;-webkit-text-stroke:0.25px;">Writing days:</div>
<div class="t" style="left:896.5px;top:1047.8px;font-size:23.7px;color:#262626;-webkit-text-stroke:0.3px;">11</div>
<div class="t" style="left:611.2px;top:1099.2px;font-size:23.5px;letter-spacing:-0.262px;color:#262626;font-weight:bold;-webkit-text-stroke:0.25px;">Words written:</div>
<div class="sel" style="left:1139.5px;top:1093.5px;width:362.5px;height:32.5px"></div>
<div class="t" style="left:1153px;top:1099.6px;font-size:23.7px;letter-spacing:-0.259px;color:#262626;-webkit-text-stroke:0.3px;">Average per day:</div>
<div class="stp" style="left:1474px;top:1098px"><svg width="24" height="24" viewBox="0 0 24 24" fill="none"><path d="M8.3 9.4 L12 5.8 L15.7 9.4 M8.3 14.7 L12 18.3 L15.7 14.7" stroke="#fff" stroke-width="2.3" stroke-linecap="round" stroke-linejoin="round"/></svg></div>
<div class="t" style="left:628.5px;top:1142.7px;font-size:23.7px;letter-spacing:0.42px;color:#262626;-webkit-text-stroke:0.3px;">In Draft:</div>
<div class="t" style="left:897.7px;top:1142.7px;font-size:23.7px;letter-spacing:0.386px;color:#262626;-webkit-text-stroke:0.3px;">9,243</div>
<div class="t" style="left:1161.6px;top:1142.7px;font-size:23.7px;color:#262626;-webkit-text-stroke:0.3px;transform:scaleX(1.078);transform-origin:0 0;">840</div>
<div class="t" style="left:628.8px;top:1186.8px;font-size:23.7px;letter-spacing:-0.07px;color:#262626;-webkit-text-stroke:0.3px;">Elsewhere:</div>
<div class="t" style="left:897.6px;top:1186.8px;font-size:23.7px;letter-spacing:-0.344px;color:#262626;-webkit-text-stroke:0.3px;">2,193</div>
<div class="t" style="left:1160.9px;top:1186.8px;font-size:23.7px;letter-spacing:-0.007px;color:#262626;-webkit-text-stroke:0.3px;">199</div>
<div class="t" style="left:630.2px;top:1230.9px;font-size:23.7px;letter-spacing:-0.055px;color:#262626;-webkit-text-stroke:0.3px;">Total:</div>
<div class="t" style="left:897px;top:1230.9px;font-size:23.7px;letter-spacing:-0.648px;color:#262626;-webkit-text-stroke:0.3px;">11,436</div>
<div class="t" style="left:1160.9px;top:1230.9px;font-size:23.7px;letter-spacing:-0.119px;color:#262626;-webkit-text-stroke:0.3px;">1,040</div>
<div id="exp"></div>
<div class="t" style="left:634.2px;top:1348px;font-size:26.5px;letter-spacing:0.515px;color:#262626;-webkit-text-stroke:0.3px;">Export...</div>
<div id="ok"></div>
<div class="t" style="left:1421.2px;top:1347.6px;font-size:26.5px;letter-spacing:-1.735px;color:#fff;-webkit-text-stroke:0.3px;">OK</div>
</body></html>
